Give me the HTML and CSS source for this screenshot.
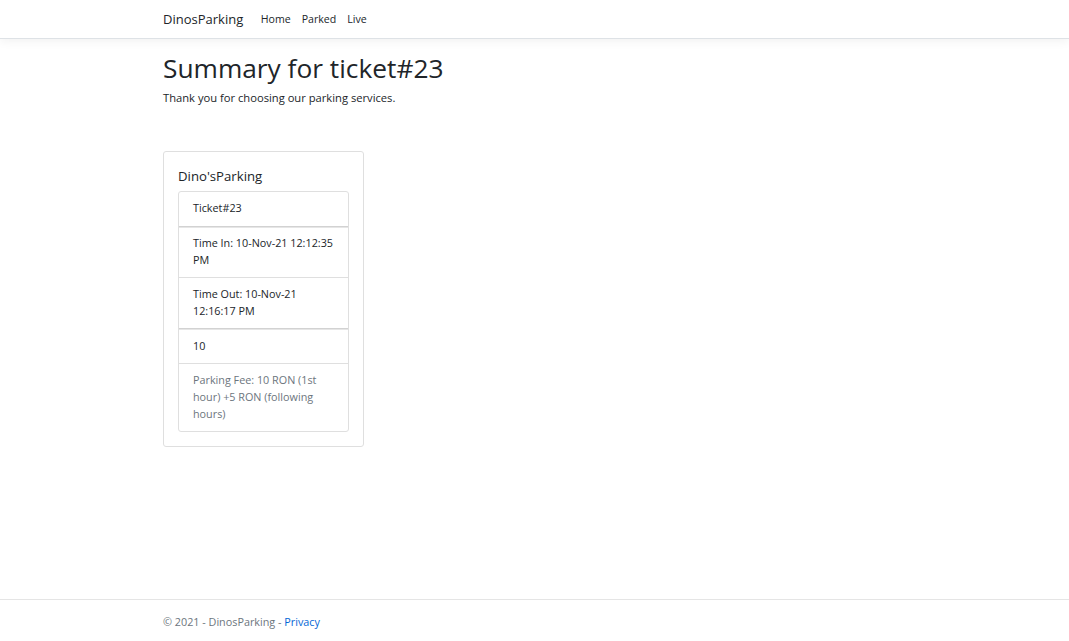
FILE: index.html
```html
<!DOCTYPE html>
<html lang="en">
<head>
<meta charset="utf-8">
<title>Summary - DinosParking</title>
<link rel="stylesheet" href="styles.css">
</head>
<body>
<header class="navbar">
  <div class="container nav-inner">
    <a class="brand" href="#">DinosParking</a>
    <nav class="nav-links">
      <a href="#">Home</a>
      <a href="#">Parked</a>
      <a href="#">Live</a>
    </nav>
  </div>
</header>
<main class="container main">
  <h1 class="title">Summary for ticket#23</h1>
  <p class="lead-text">Thank you for choosing our parking services.</p>
  <div class="card">
    <h5 class="card-title">Dino'sParking</h5>
    <ul class="list">
      <li class="item">Ticket#23</li>
      <li class="item sep">Time In: 10-Nov-21 12:12:35 PM</li>
      <li class="item">Time Out: 10-Nov-21 12:16:17 PM</li>
      <li class="item sep">10</li>
      <li class="item muted">Parking Fee: 10 RON (1st hour) +5 RON (following hours)</li>
    </ul>
  </div>
</main>
<footer class="footer">
  <div class="container">&copy; 2021 - DinosParking - <a href="#">Privacy</a></div>
</footer>
</body>
</html>
```
FILE: styles.css
```css
html, body {
  margin: 0;
  padding: 0;
  height: 100%;
}
body {
  font-family: "Open Sans", "Noto Sans", sans-serif;
  font-size: 11px;
  line-height: 17px;
  color: #212529;
  background: #fff;
  display: flex;
  flex-direction: column;
  overflow: hidden;
}
a { text-decoration: none; }
.container {
  padding: 0 0 0 163px;
}
.navbar {
  height: 38px;
  border-bottom: 1px solid #dee2e6;
  box-shadow: 0 3px 9px rgba(0, 0, 0, 0.05);
  display: flex;
  align-items: center;
  flex: none;
}
.nav-inner {
  display: flex;
  align-items: center;
}
.brand {
  font-size: 13px;
  color: #212529;
  margin-right: 12px;
}
.nav-links {
  display: flex;
}
.nav-links a {
  color: #212529;
  padding: 0 5.5px;
  font-size: 10.6px;
}
.main {
  flex: 1;
  padding-top: 12px;
}
.title {
  font-size: 26.3px;
  font-weight: 400;
  line-height: 34px;
  margin: 0 0 4px 0;
}
.lead-text {
  margin: 0 0 45px 0;
  font-size: 11.2px;
}
.card {
  width: 171px;
  border: 1px solid #dfdfdf;
  border-radius: 3px;
  padding: 15px 14px 14px 14px;
}
.card-title {
  font-size: 13.2px;
  font-weight: 400;
  line-height: 19px;
  margin: 0 0 5px 0;
}
.list {
  list-style: none;
  margin: 0;
  padding: 0;
  border: 1px solid #dfdfdf;
  border-radius: 3px;
}
.item {
  padding: 8.4px 14px;
  font-size: 10.8px;
  line-height: 16.8px;
  border-top: 1px solid #dfdfdf;
}
.item:first-child { border-top: 0; }
.item.sep {
  border-top-color: #d2d2d2;
  box-shadow: inset 0 1px 0 #e6e6e6;
}
.muted { color: #6c757d; }
.footer {
  flex: none;
  border-top: 1px solid #e5e5e5;
  height: 41px;
  line-height: 44px;
  color: #6c757d;
  font-size: 10.8px;
}
.footer a { color: #0366d6; }
```
